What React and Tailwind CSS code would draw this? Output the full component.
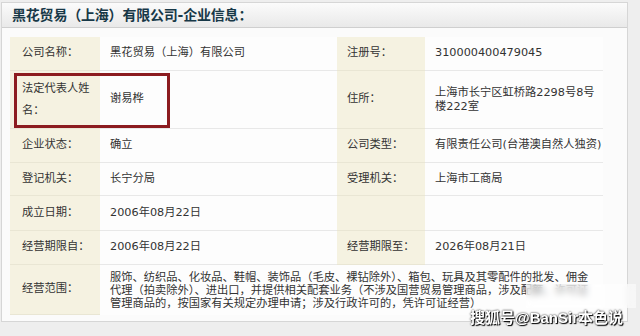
const FONT = "font-['DejaVu_Sans','Noto_Sans_CJK_SC',sans-serif]";

const ROWS = [
  { h: 'h-[34px]', cells: ['公司名称：', '黑花贸易（上海）有限公司', '注册号：', '310000400479045'] },
  {
    h: 'h-[58px]',
    cells: [
      <span className="leading-[22px]">法定代表人姓<br />名：</span>,
      '谢易桦',
      '住所：',
      <span className="leading-[14px]">上海市长宁区虹桥路2298号8号<br />楼222室</span>,
    ],
  },
  { h: 'h-[34px]', cells: ['企业状态：', '确立', '公司类型：', '有限责任公司(台港澳自然人独资)'] },
  { h: 'h-[33px]', cells: ['登记机关：', '长宁分局', '受理机关：', '上海市工商局'] },
  { h: 'h-[35px]', cells: ['成立日期：', '2006年08月22日', '', ''] },
  { h: 'h-[34px]', cells: ['经营期限自：', '2006年08月22日', '经营期限至：', '2026年08月21日'] },
];

const label = 'bg-[#f5f2e1] border-b border-[#e9e6d4] flex items-center';
const value = 'bg-[#fdfdfd] border-b border-[#e8e8e8] flex items-center px-[10px] whitespace-nowrap';

function App() {
  return (
    <div className={`relative w-[640px] h-[336px] overflow-hidden bg-[#eeeeee] ${FONT}`}>
      <div className="mt-[2px] ml-[1px] w-[627px] border border-[#d6d6d6] bg-[#fbfbfb]">
        <div className="h-[25px] flex items-center pl-[10px] border-b border-[#cfcfcf] bg-gradient-to-b from-[#fbfbfb] to-[#e9e9e9]">
          <h1 className="text-[14px] font-bold text-[#173847] tracking-[-0.2px]">
            黑花贸易（上海）有限公司-企业信息：
          </h1>
        </div>

        <div className="px-[8px] pt-[9px] pb-[6px]">
          <div className="relative w-[593px] grid grid-cols-[90px_237px_88px_178px] text-[11.25px] text-[#333333]">
            {ROWS.map((row, i) =>
              row.cells.map((cell, j) => (
                <div
                  key={`${i}-${j}`}
                  className={`${row.h} ${j % 2 === 0 ? label : value} ${j === 0 ? 'pl-[12px]' : ''} ${j === 2 ? 'pl-[10px]' : ''}`}
                >
                  {cell}
                </div>
              ))
            )}

            <div className={`h-[50px] ${label} pl-[12px]`}>经营范围：</div>
            <div className="col-span-3 h-[50px] bg-[#fdfdfd] flex flex-col justify-center px-[10px] leading-[13px] whitespace-nowrap">
              <span>服饰、纺织品、化妆品、鞋帽、装饰品（毛皮、裸钻除外）、箱包、玩具及其零配件的批发、佣金</span>
              <span>代理（拍卖除外）、进出口，并提供相关配套业务（不涉及国营贸易管理商品，涉及配额、许可证</span>
              <span>管理商品的，按国家有关规定办理申请；涉及行政许可的，凭许可证经营）</span>
            </div>

            {/* highlight box */}
            <div className="absolute left-[4px] top-[36px] w-[156px] h-[55px] border-[3px] border-[#8c1c20]" />
          </div>
        </div>
      </div>

      {/* blurred patch + watermark */}
      <div className="absolute left-[526px] top-[284px] w-[110px] h-[24px] backdrop-blur-[3px] bg-white/50" />
      <div className="absolute left-[470px] top-[309px] text-[15px] leading-[18px] font-bold text-white font-['Liberation_Sans','Noto_Sans_CJK_SC',sans-serif] [text-shadow:0_0_2px_#000,1px_1px_1px_#000]">
        搜狐号@BanSir本色说
      </div>
    </div>
  );
}

export default App;
